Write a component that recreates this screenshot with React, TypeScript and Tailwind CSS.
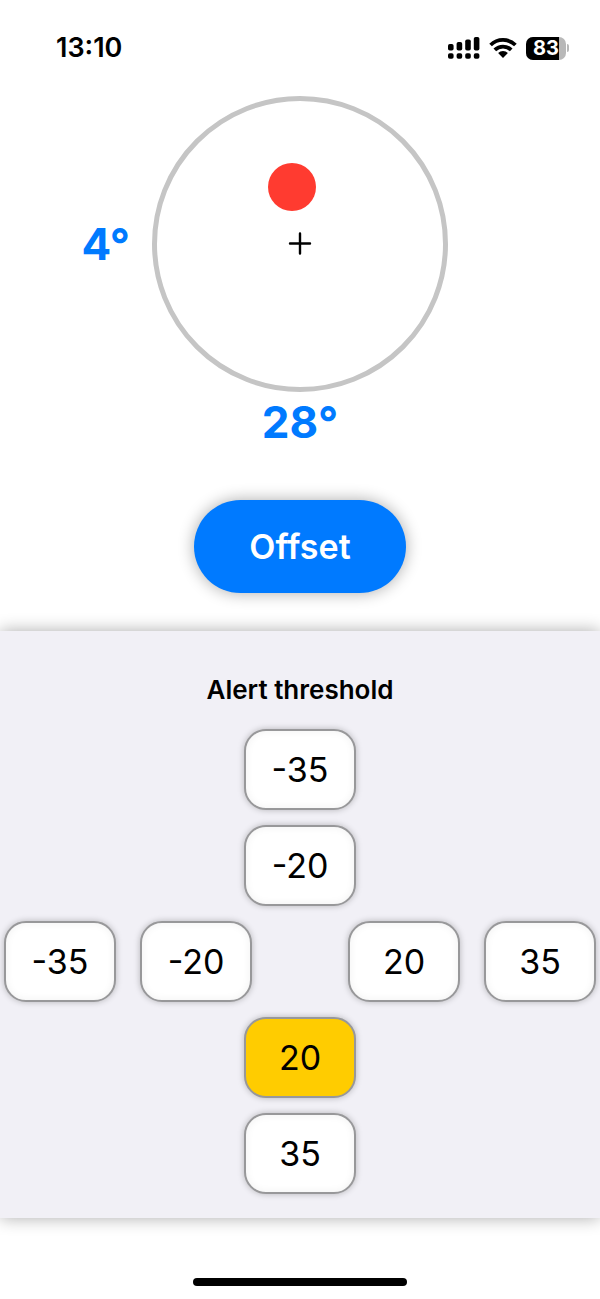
import { useState } from "react"
import clsx from "clsx"

// Threshold buttons, laid out as a cross: pitch runs down, roll runs across
const PITCH_UP = [-35, -20]
const PITCH_DOWN = [20, 35]
const ROLL_LEFT = [-35, -20]
const ROLL_RIGHT = [20, 35]

interface ThresholdButtonProps {
  label: string
  value: number
  active: boolean
  onClick: () => void
}

function ThresholdButton({ label, value, active, onClick }: ThresholdButtonProps) {
  return (
    <button
      type="button"
      aria-label={`${label} ${value}`}
      aria-pressed={active}
      onClick={onClick}
      className={clsx(
        "h-[81px] w-28 min-w-0 rounded-[22px] border-2 border-[#98989a] text-[34px] leading-10 text-black",
        active
          ? "bg-[#ffcc00] shadow-[0_0_6px_rgba(0,0,0,0.25)]"
          : "bg-white shadow-[0_0_6px_rgba(0,0,0,0.25),inset_0_0_8px_rgba(0,0,0,0.06)]"
      )}
    >
      {value}
    </button>
  )
}

function SignalIcon() {
  return (
    <svg width="32" height="22" viewBox="0 0 32 22" aria-hidden="true">
      <rect x="0" y="7" width="5.6" height="6.5" rx="1.8" />
      <rect x="8.6" y="5" width="5.6" height="8.5" rx="1.8" />
      <rect x="17.2" y="2.5" width="5.6" height="11" rx="1.8" />
      <rect x="25.8" y="0" width="5.6" height="13.5" rx="1.8" />
      <rect x="0" y="16.2" width="5.6" height="5.6" rx="1.8" />
      <rect x="8.6" y="16.2" width="5.6" height="5.6" rx="1.8" />
      <rect x="17.2" y="16.2" width="5.6" height="5.6" rx="1.8" />
      <rect x="25.8" y="16.2" width="5.6" height="5.6" rx="1.8" />
    </svg>
  )
}

function WifiIcon() {
  return (
    <svg width="28" height="20" viewBox="0 0 28 20" aria-hidden="true">
      <g fill="none" stroke="black" strokeWidth="3.8">
        <path d="M1.6 7a17.8 17.8 0 0 1 24.8 0" />
        <path d="M5.8 11.9a11.8 11.8 0 0 1 16.4 0" />
      </g>
      <path d="M14 20l-4.9-4.9a7 7 0 0 1 9.8 0z" />
    </svg>
  )
}

function Battery({ level }: { level: number }) {
  return (
    <div className="flex items-center gap-px">
      <div className="relative h-[23px] w-10 overflow-hidden rounded-[7px] bg-[#b8b8b8]">
        <div className="h-full bg-black" style={{ width: `${level}%` }} />
        <span className="absolute inset-0 flex items-center justify-center text-[20px] font-bold text-white">
          {level}
        </span>
      </div>
      <div className="h-2 w-[2px] rounded-r-full bg-[#b8b8b8]" />
    </div>
  )
}

function StatusBar() {
  return (
    <header className="flex h-24 items-center justify-between pr-[31px] pl-14">
      <time className="text-[27px] leading-8 font-semibold">13:10</time>
      <div className="flex items-center gap-[9px]">
        <SignalIcon />
        <WifiIcon />
        <Battery level={83} />
      </div>
    </header>
  )
}

function TiltDial({ x, y }: { x: number; y: number }) {
  return (
    <svg viewBox="0 0 296 296" className="block w-full" role="img" aria-label="Tilt">
      <circle cx="148" cy="148" r="145.5" fill="none" stroke="#c5c5c5" strokeWidth="5" />
      <circle cx={148 + x} cy={148 + y} r="24" fill="#ff3b30" />
      <path d="M138 147.5h20M148 137.5v20" stroke="black" strokeWidth="2.4" strokeLinecap="round" />
    </svg>
  )
}

export default function App() {
  const [pitch, setPitch] = useState<number | null>(20)
  const [roll, setRoll] = useState<number | null>(null)

  const pitchButton = (value: number) => (
    <ThresholdButton
      key={value}
      label="Pitch"
      value={value}
      active={pitch === value}
      onClick={() => setPitch(pitch === value ? null : value)}
    />
  )

  const rollButton = (value: number) => (
    <ThresholdButton
      key={value}
      label="Roll"
      value={value}
      active={roll === value}
      onClick={() => setRoll(roll === value ? null : value)}
    />
  )

  return (
    <div className="flex min-h-screen flex-col bg-white font-['Inter',sans-serif] text-black">
      <StatusBar />

      <main className="flex flex-col">
        <section className="flex flex-col items-center">
          <div className="grid w-full grid-cols-[1fr_296px_1fr] items-center">
            <p className="pr-[22px] text-right text-[44px] leading-[60px] font-bold text-[#007aff]">4°</p>
            <TiltDial x={-8} y={-57} />
          </div>
          <p className="text-[44px] leading-[60px] font-bold text-[#007aff]">28°</p>
          <button
            type="button"
            className="mt-12 h-[93px] w-[212px] rounded-full bg-[#007aff] text-[34px] leading-10 font-semibold text-white shadow-[0_0_16px_rgba(0,0,0,0.33)]"
          >
            Offset
          </button>
        </section>

        <section className="mt-[38px] flex flex-col items-center gap-[15px] bg-[#f1f0f6] px-1 pt-10 pb-6 shadow-[0_0_16px_rgba(0,0,0,0.33)]">
          <h2 className="mb-[5px] text-[26px] leading-[38px] font-semibold">Alert threshold</h2>
          {PITCH_UP.map(pitchButton)}
          <div className="flex w-full justify-center gap-24">
            <div className="flex gap-6">{ROLL_LEFT.map(rollButton)}</div>
            <div className="flex gap-6">{ROLL_RIGHT.map(rollButton)}</div>
          </div>
          {PITCH_DOWN.map(pitchButton)}
        </section>
      </main>

      <footer className="mt-auto flex justify-center pb-[13px]">
        <div className="h-2 w-[214px] rounded-full bg-black" />
      </footer>
    </div>
  )
}
